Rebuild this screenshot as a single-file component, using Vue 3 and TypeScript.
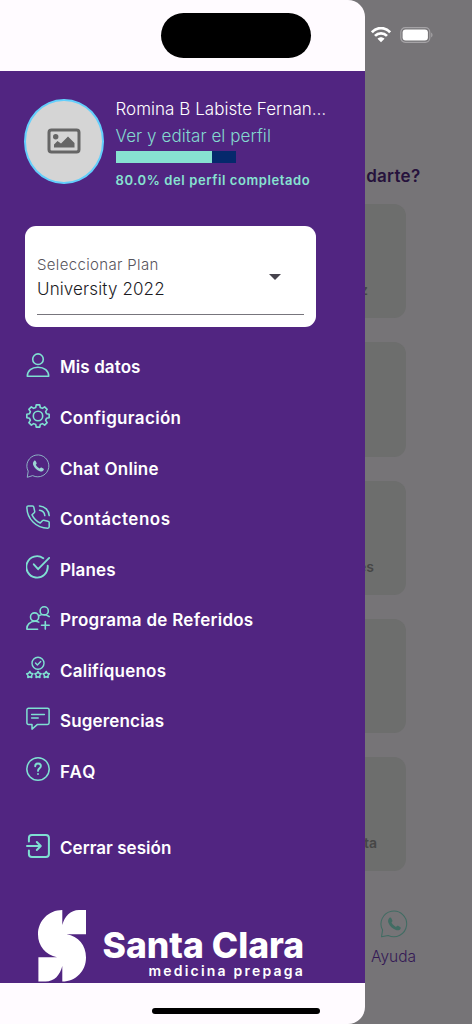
<script setup lang="ts">
type IconName = 'user' | 'gear' | 'chat' | 'phone' | 'check' | 'referral' | 'rating' | 'message' | 'faq' | 'exit'

interface MenuItem {
  label: string
  icon: IconName
  spacing: number
}

const menu: MenuItem[] = [
  { label: 'Mis datos', icon: 'user', spacing: 0.1 },
  { label: 'Configuración', icon: 'gear', spacing: 0.34 },
  { label: 'Chat Online', icon: 'chat', spacing: 0.28 },
  { label: 'Contáctenos', icon: 'phone', spacing: 0.5 },
  { label: 'Planes', icon: 'check', spacing: 0.1 },
  { label: 'Programa de Referidos', icon: 'referral', spacing: 0.27 },
  { label: 'Califíquenos', icon: 'rating', spacing: 0.23 },
  { label: 'Sugerencias', icon: 'message', spacing: 0.16 },
  { label: 'FAQ', icon: 'faq', spacing: 1.1 },
  { label: 'Cerrar sesión', icon: 'exit', spacing: 0.05 },
]

const cards: string[] = ['z', '', 'es', '', 'ta']

const progress = 80

const gearPath = (() => {
  const pts: string[] = []
  const teeth = 8
  for (let i = 0; i < teeth; i++) {
    const base = (i * 360) / teeth - 90
    const steps: [number, number][] = [[-15, 8.8], [-9, 11.3], [9, 11.3], [15, 8.8]]
    for (const [offset, r] of steps) {
      const a = ((base + offset) * Math.PI) / 180
      pts.push(`${(12 + r * Math.cos(a)).toFixed(2)} ${(12 + r * Math.sin(a)).toFixed(2)}`)
    }
  }
  return `M${pts.join('L')}Z`
})()

const starPath = (cx: number, cy: number) => {
  const pts: string[] = []
  for (let i = 0; i < 10; i++) {
    const r = i % 2 ? 1.9 : 3.3
    const a = ((i * 36 - 90) * Math.PI) / 180
    pts.push(`${(cx + r * Math.cos(a)).toFixed(2)} ${(cy + r * Math.sin(a)).toFixed(2)}`)
  }
  return `M${pts.join('L')}Z`
}
</script>

<template>
  <div class="screen">
    <main class="home">
      <h1 class="question">darte?</h1>
      <div class="cards">
        <div v-for="(card, i) in cards" :key="i" class="card">{{ card }}</div>
      </div>
      <div class="help">
        <svg class="help-icon" viewBox="0 0 24 24" fill="none" stroke="currentColor" stroke-width="0.9">
          <path d="M1.300 23 2.200 17.200A11 11 0 1 1 7 21.800Z" stroke-linejoin="round" />
          <path fill="currentColor" stroke="none" d="M8 6.900c.6-.7 1.500-.4 1.800.3l.8 1.800c.2.500 0 .9-.8 1.800 1 1.800 2.200 2.900 3.900 3.700.9-.9 1.200-1.200 1.800-.9l1.700.9c.8.400.8.900.3 1.700-.8 1.300-2.300 1.500-3.800 1-3-1-5.300-3.200-6.500-6.200-.5-1.500-.3-3 .8-4.100Z" />
        </svg>
        <span>Ayuda</span>
      </div>
    </main>

    <aside class="drawer">
      <div class="safe-top"></div>
      <div class="panel">
        <header class="profile">
          <div class="avatar">
            <svg width="34" height="26" viewBox="0 0 34 26">
              <rect x="2" y="2" width="30" height="22" rx="2.5" fill="none" stroke="#666" stroke-width="3" />
              <circle cx="8.700" cy="8.800" r="2.700" fill="#666" />
              <path d="M7 19.500v-3l3.500-3.500 3.500 2.500 7-7 6.500 6.500v4.500Z" fill="#666" />
            </svg>
          </div>
          <div class="profile-info">
            <div class="name">Romina B Labiste Fernan…</div>
            <div class="edit">Ver y editar el perfil</div>
            <div class="bar"><div class="fill" :style="{ width: progress + '%' }"></div></div>
            <div class="percent">80.0% del perfil completado</div>
          </div>
        </header>

        <section class="select">
          <div class="select-field">
            <div>
              <div class="select-label">Seleccionar Plan</div>
              <div class="select-value">University 2022</div>
            </div>
            <svg class="caret" width="12" height="6" viewBox="0 0 12 6"><path d="M0 0h12L6 6Z" fill="#46434d" /></svg>
          </div>
        </section>

        <nav class="menu">
          <a v-for="item in menu" :key="item.icon" :class="['item', item.icon]">
            <svg class="icon" viewBox="0 0 24 24" fill="none" stroke="currentColor" stroke-width="1.600" stroke-linecap="round" stroke-linejoin="round">
              <template v-if="item.icon === 'user'">
                <circle cx="12" cy="6.200" r="5.300" />
                <path d="M1.300 23.200c0-5.300 4.400-9 10.700-9s10.700 3.700 10.700 9Z" />
              </template>
              <template v-else-if="item.icon === 'gear'">
                <path :d="gearPath" stroke-width="1.600" />
                <circle cx="12" cy="12" r="4.700" stroke-width="1.600" />
              </template>
              <template v-else-if="item.icon === 'chat'">
                <path d="M1.300 22.900 2.200 17.200A11 11 0 1 1 7 21.800Z" stroke-width=".8" />
                <path fill="currentColor" stroke="none" d="M8 6.900c.6-.7 1.500-.4 1.800.3l.8 1.800c.2.500 0 .9-.8 1.800 1 1.800 2.200 2.900 3.900 3.700.9-.9 1.200-1.200 1.800-.9l1.700.9c.8.400.8.900.3 1.700-.8 1.300-2.300 1.500-3.800 1-3-1-5.300-3.200-6.500-6.200-.5-1.500-.3-3 .8-4.100Z" />
              </template>
              <template v-else-if="item.icon === 'phone'">
                <path stroke-width="1.500" d="M2.300.9h4.200c.7 0 1.200.5 1.300 1.200l.9 4.300c.1.500-.1 1-.5 1.300L6 9.800c1.800 3.700 4.500 6.500 8.200 8.200l2.200-2.300c.4-.4.900-.5 1.400-.4l4.200.9c.7.100 1.200.700 1.200 1.400v4.200c0 .8-.6 1.400-1.400 1.400C10.200 23.200.9 13.800.9 2.300.9 1.500 1.500.9 2.300.9Z" />
                <path stroke-width="1.500" d="M13.500.9c5.300.3 9.400 4.400 9.700 9.700M13.500 5.300c2.900.3 5 2.400 5.300 5.300" />
              </template>
              <template v-else-if="item.icon === 'check'">
                <path stroke-width="1.900" d="M17.300 3.200A10.700 10.700 0 1 0 21.700 10.800M7.800 9.300l4.300 4.900L23.200 2.900" />
              </template>
              <template v-else-if="item.icon === 'referral'">
                <circle cx="18.200" cy="4.900" r="4.100" />
                <circle cx="8.600" cy="11" r="4.100" />
                <path d="M11.600 23.200H.9c-.3-4.400 3-7.900 8.200-7.900 1.400 0 2.700.3 3.700.8M12.500 9.900c3.200-1.800 7.800-1.400 10.700.7M19.300 15.500v7.600M15.500 19.300h7.700" />
              </template>
              <template v-else-if="item.icon === 'rating'">
                <circle cx="12" cy="7.300" r="6" stroke-width="1.400" />
                <path d="m9.500 7 1.900 2 3.300-3.400" stroke-width="1.400" />
                <path v-for="x in [3.800, 12, 20.200]" :key="x" :d="starPath(x, 18.800)" stroke-width="1.500" />
              </template>
              <template v-else-if="item.icon === 'message'">
                <path stroke-width="1.500" d="M2.500 1.200h19c.9 0 1.600.7 1.600 1.600v13c0 .9-.7 1.600-1.600 1.600H11.500L6 22.100v-4.700H2.500c-.9 0-1.600-.7-1.600-1.600v-13c0-.9.700-1.600 1.600-1.600ZM5.600 7.500h12.800M5.600 11.100h6.600" />
              </template>
              <template v-else-if="item.icon === 'faq'">
                <circle cx="12" cy="12" r="11.200" stroke-width="1.500" />
                <path stroke-width="1.900" d="M9.200 9.200C9.200 7.500 10.400 6.500 12 6.500s2.900 1.100 2.900 2.600c0 2.200-2.900 2.300-2.900 4.800M12 16.900v.2" />
              </template>
              <template v-else>
                <path stroke-width="2" d="M2.900 7.500V4.100c0-1.800 1.200-3 3-3h14c1.800 0 3 1.200 3 3v15.800c0 1.800-1.200 3-3 3h-14c-1.800 0-3-1.200-3-3v-3.400M1 12h13.300M10.800 8l4 4-4 4" />
              </template>
            </svg>
            <span class="item-label" :style="{ letterSpacing: item.spacing + 'px' }">{{ item.label }}</span>
          </a>
        </nav>

        <footer class="brand">
          <svg class="mark" viewBox="0 0 48 72" fill="#fff">
            <path d="M24.300 0V15C26.500 6.500 32.500 0 41 0H48V24.300H28.500C40.500 26 48 35.500 48 47.500 48 61 38 71.500 24.300 71.500V56C22 65 16.500 71.500 7.500 71.500H.4V47.300H19C7.500 44.500 0 36 0 24.500 0 11 10.500 0 24.300 0Z" />
          </svg>
          <div class="brand-text">
            <div class="brand-name">Santa Clara</div>
            <div class="brand-sub">medicina prepaga</div>
          </div>
        </footer>
      </div>
      <div class="safe-bottom"></div>
    </aside>

    <div class="island"></div>
    <div class="status">
      <svg width="20" height="16" viewBox="0 0 20 16" fill="none" stroke="#fff" stroke-width="2.700">
        <path d="M.9 5.300C6-.3 14-.3 19.100 5.300M4 8.900c3.300-3.500 8.700-3.500 12 0" />
        <path d="M6.500 11.800c2-2 5-2 7 0L10 15.200Z" fill="#fff" stroke="none" />
      </svg>
      <svg width="34" height="16" viewBox="0 0 34 16">
        <rect x=".8" y=".7" width="29" height="14.600" rx="4.500" fill="none" stroke="#a5a3a6" stroke-width="1.200" />
        <rect x="2.600" y="2.400" width="25.300" height="11.200" rx="3" fill="#fff" />
        <path d="M31.200 5.500c1.700.7 1.700 4.300 0 5Z" fill="#a5a3a6" />
      </svg>
    </div>
    <div class="home-bar"></div>
  </div>
</template>

<style>
html,
body {
  margin: 0;
  background: #767477;
}
</style>

<style scoped>
.screen {
  position: relative;
  width: 472px;
  height: 1024px;
  overflow: hidden;
  background: #767477;
  font-family: Inter, "Noto Sans", sans-serif;
  white-space: nowrap;
}
.home {
  display: flex;
  flex-direction: column;
  align-items: flex-end;
  height: 100%;
}
.question {
  margin: 164px 51.500px 0 0;
  font-size: 17px;
  line-height: 24px;
  font-weight: 600;
  letter-spacing: 0.3px;
  color: #26123c;
}
.cards {
  display: flex;
  flex-direction: column;
  gap: 24px;
  margin: 16px 66px 0 0;
}
.card {
  box-sizing: border-box;
  width: 170px;
  height: 114.300px;
  padding: 75px 38px 0 0;
  border-radius: 12px;
  background: #6d6e6d;
  color: #464646;
  font-size: 14px;
  line-height: 22px;
  font-weight: 600;
  text-align: right;
}
.card:nth-child(3) {
  padding-right: 32px;
}
.card:nth-child(5) {
  padding-right: 29px;
}
.help {
  display: flex;
  flex-direction: column;
  align-items: center;
  width: 60px;
  margin: 38.500px 48.500px 0 0;
  color: #341955;
  font-size: 15.500px;
  line-height: 22px;
  font-weight: 300;
}
.help-icon {
  width: 28px;
  height: 28px;
  margin-bottom: 8px;
  color: #416c63;
}
.drawer {
  position: absolute;
  inset: 0 auto 0 0;
  display: flex;
  flex-direction: column;
  width: 365px;
  overflow: hidden;
  border-radius: 0 17px 17px 0;
  background: #fffbff;
}
.safe-top {
  flex: none;
  height: 70.500px;
}
.safe-bottom {
  flex: none;
  height: 41px;
}
.panel {
  flex: 1;
  min-height: 0;
  background: #512581;
}
.profile {
  display: flex;
  gap: 12px;
  height: 90px;
  padding: 28.500px 0 0 24px;
}
.avatar {
  box-sizing: border-box;
  display: flex;
  align-items: center;
  justify-content: center;
  width: 79.500px;
  height: 84.500px;
  border: 2px solid #63cffc;
  border-radius: 50%;
  background: #d5d5d5;
}
.name {
  margin-top: -1.200px;
  font-size: 17px;
  line-height: 22px;
  font-weight: 300;
  letter-spacing: 0.030px;
  color: #fff;
}
.edit {
  margin-top: 4.700px;
  font-size: 17px;
  line-height: 22px;
  font-weight: 300;
  letter-spacing: 0.070px;
  color: #84d9d0;
}
.bar {
  width: 120px;
  height: 12px;
  margin-top: 4.500px;
  background: #05296c;
}
.fill {
  height: 100%;
  background: #87e2d1;
}
.percent {
  margin-top: 8px;
  font-size: 13px;
  line-height: 18px;
  font-weight: 600;
  letter-spacing: 0.600px;
  color: #87e2d1;
}
.select {
  box-sizing: border-box;
  width: 290.500px;
  height: 101px;
  margin: 36.500px 0 0 25px;
  padding: 28.500px 12px 12px;
  border-radius: 11px;
  background: #fff;
}
.select-field {
  display: flex;
  justify-content: space-between;
  height: 60px;
  border-bottom: 1px solid #77757c;
}
.select-label {
  font-size: 15px;
  line-height: 22px;
  font-weight: 300;
  letter-spacing: 0.340px;
  color: #57545c;
}
.select-value {
  margin-top: 0;
  font-size: 17px;
  line-height: 26px;
  font-weight: 300;
  letter-spacing: 0.130px;
  color: #1c1b1f;
}
.caret {
  margin: 19.500px 23px 0 0;
}
.menu {
  margin-top: 15.700px;
}
.item {
  display: flex;
  align-items: center;
  gap: 10px;
  height: 50.550px;
  padding-left: 26px;
}
.item.exit {
  margin-top: 26px;
}
.icon {
  width: 24px;
  height: 24px;
  margin-top: -5px;
  color: #7fe0d2;
}
.chat .icon {
  color: #9bd6d4;
}
.item-label {
  font-size: 17px;
  font-weight: 600;
  color: #fff;
}
.brand {
  display: flex;
  gap: 17px;
  margin: 36.800px 0 0 37.500px;
  color: #fff;
}
.mark {
  width: 48px;
  height: 72px;
}
.brand-name {
  margin-top: 17.500px;
  font-size: 35.500px;
  line-height: 35px;
  font-weight: 800;
  letter-spacing: 0;
}
.brand-sub {
  margin-top: 0.500px;
  padding-left: 46px;
  font-size: 14px;
  line-height: 16px;
  font-weight: 600;
  letter-spacing: 2.200px;
}
.island {
  position: absolute;
  left: 161px;
  top: 13px;
  width: 150px;
  height: 44.500px;
  border-radius: 23px;
  background: #000;
}
.status {
  position: absolute;
  left: 371px;
  top: 27px;
  display: flex;
  gap: 8.500px;
}
.home-bar {
  position: absolute;
  left: 152px;
  top: 1008px;
  width: 168px;
  height: 6px;
  border-radius: 3px;
  background: #000;
}
</style>
